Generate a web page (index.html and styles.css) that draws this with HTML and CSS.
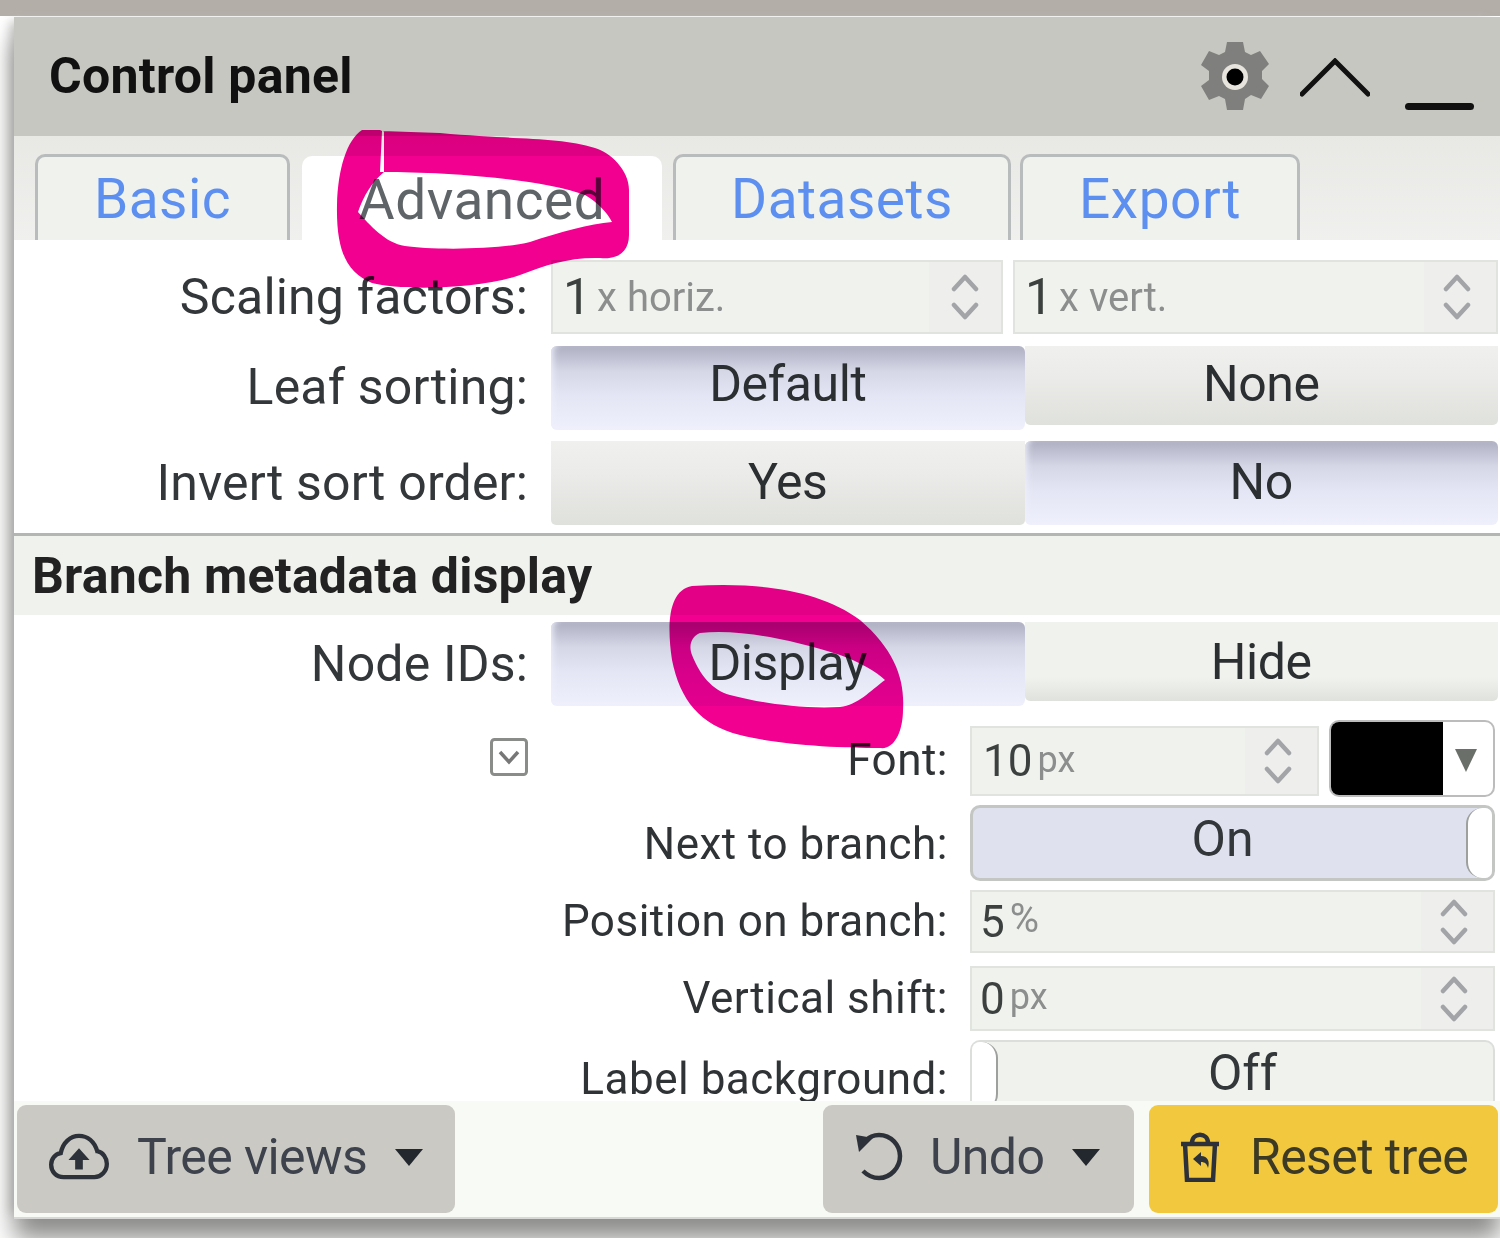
FILE: index.html
```html
<!DOCTYPE html>
<html lang="en">
<head>
<meta charset="utf-8">
<title>Control panel</title>
<link rel="stylesheet" href="styles.css">
</head>
<body>
<div class="page">
  <section class="panel">
    <header class="head">
      <h1 class="title">Control panel</h1>
      <div class="head-icons">
        <svg class="i-gear" viewBox="0 0 70 72"><path fill="#7f7f7d" fill-rule="evenodd" d="M27 1h16l2 10 6 3 9-4 9 13-7 7v8l7 7-8 13-10-4-6 4-2 11H27l-2-11-6-3-10 4-8-14 8-6v-9l-8-6 8-14 10 4 6-3z"/><circle cx="35" cy="36" r="13" fill="#e6e4dc"/><circle cx="35" cy="36" r="8.5" fill="#000"/></svg>
        <svg class="i-up" viewBox="0 0 70 40"><path d="M2 36 35 3l33 33" fill="none" stroke="#111" stroke-width="5" stroke-linecap="round" stroke-linejoin="miter"/></svg>
        <span class="i-min"></span>
      </div>
    </header>
    <nav class="tabs">
      <a class="tab t-basic">Basic</a>
      <a class="tab t-adv active">Advanced</a>
      <a class="tab t-data">Datasets</a>
      <a class="tab t-exp">Export</a>
    </nav>
    <div class="body">
      <div class="row r-scale">
        <label class="lab">Scaling factors:</label>
        <div class="ctl two">
          <div class="num n-first"><b>1</b><small>x horiz.</small><span class="spin"><svg viewBox="0 0 28 46"><path d="M3 15 14 3l11 12M3 31l11 12 11-12"/></svg></span></div>
          <div class="num"><b>1</b><small>x vert.</small><span class="spin"><svg viewBox="0 0 28 46"><path d="M3 15 14 3l11 12M3 31l11 12 11-12"/></svg></span></div>
        </div>
      </div>
      <div class="row r-leaf">
        <label class="lab">Leaf sorting:</label>
        <div class="ctl seg"><button class="on">Default</button><button>None</button></div>
      </div>
      <div class="row r-inv">
        <label class="lab">Invert sort order:</label>
        <div class="ctl seg"><button>Yes</button><button class="on">No</button></div>
      </div>
      <h2 class="sect">Branch metadata display</h2>
      <div class="row r-node">
        <label class="lab">Node IDs:</label>
        <div class="ctl seg"><button class="on">Display</button><button>Hide</button></div>
      </div>
      <div class="sub">
        <div class="chev"><svg viewBox="0 0 38 38"><rect x="1.5" y="1.5" width="35" height="35" rx="3"/><path d="M10 14l9 10 9-10"/></svg></div>
        <div class="sub-rows">
          <div class="srow s-font">
            <label class="slab">Font:</label>
            <div class="sctl fontctl">
              <div class="num small"><b>10</b><small>px</small><span class="spin"><svg viewBox="0 0 28 46"><path d="M3 15 14 3l11 12M3 31l11 12 11-12"/></svg></span></div>
              <div class="color"><span class="swatch"></span><span class="tri"></span></div>
            </div>
          </div>
          <div class="srow s-next">
            <label class="slab">Next to branch:</label>
            <div class="sctl toggle t-on"><span class="tg-text">On</span><span class="knob"></span></div>
          </div>
          <div class="srow s-pos">
            <label class="slab">Position on branch:</label>
            <div class="sctl num small full"><b>5</b><small class="up">%</small><span class="spin"><svg viewBox="0 0 28 46"><path d="M3 15 14 3l11 12M3 31l11 12 11-12"/></svg></span></div>
          </div>
          <div class="srow s-vert">
            <label class="slab">Vertical shift:</label>
            <div class="sctl num small full"><b>0</b><small>px</small><span class="spin"><svg viewBox="0 0 28 46"><path d="M3 15 14 3l11 12M3 31l11 12 11-12"/></svg></span></div>
          </div>
          <div class="srow s-bg">
            <label class="slab">Label background:</label>
            <div class="sctl toggle t-off"><span class="knob"></span><span class="tg-text">Off</span></div>
          </div>
        </div>
      </div>
    </div>
    <footer class="foot">
      <button class="fbtn f-views">
        <svg class="fi i-cloud" viewBox="0 0 64 50"><path d="M16 46C8 46 3 40 3 33c0-6 4-11 10-12C15 10 23 3 32 3c9 0 16 6 19 16 6 1 10 7 10 13 0 8-6 14-13 14z"/><path class="fill" d="M32 16 21 28h7v10h8V28h7z"/></svg>
        <span>Tree views</span><i class="caret"></i>
      </button>
      <span class="grow"></span>
      <button class="fbtn f-undo">
        <svg class="fi i-undo" viewBox="0 0 50 50"><path d="M11 9c4-4 9-6 14-6 12 0 21 10 21 21s-9 22-21 22c-7 0-12-3-16-7"/><path class="fill" d="M2 3l17 3L5 20z"/></svg>
        <span>Undo</span><i class="caret"></i>
      </button>
      <button class="fbtn f-reset">
        <svg class="fi i-trash" viewBox="0 0 40 50"><path d="M1 12h38M5 12l2 36h26l2-36M12 11c0-11 16-11 16 0"/><path class="fill" d="M13 27l8-7v4c7 0 9 6 7 12-1-4-3-6-7-6v4z"/></svg>
        <span>Reset tree</span>
      </button>
    </footer>
  </section>
  <svg class="scribble" viewBox="0 0 1500 1238">
    <path fill-rule="evenodd" d="M362 130C347 140 338 168 337 205c-1 50 12 68 35 78 30 8 108 6 148-8 25-10 50-18 80-17 20 2 29-8 29-23v-45c0-20-19-38-34-42-35-11-75-8-155-15l-58-2-2 41 4 0 0-41-2 0-2-1zM384 172C440 172 540 178 585 195 597 202 607 212 612 222 590 224 560 232 530 242 500 250 430 250 405 246 385 243 370 225 358 212 364 195 372 182 384 172z"/>
    <path fill-rule="evenodd" d="M692 586c68-4 128 4 168 34 35 30 45 60 43 90 0 20-8 40-23 38-40 0-100-3-140-13-40-10-60-35-68-75-6-40-2-70 20-74zM700 633c-8 3-12 12-8 22 8 20 20 35 38 40 30 8 70 14 110 12 18-2 30-16 45-27-8-8-25-18-45-25-50-16-100-26-140-22z"/>
  </svg>
</div>
</body>
</html>
```
FILE: styles.css
```css
* { box-sizing: border-box; }
html, body { margin: 0; padding: 0; }
body { font-family: Roboto, "Liberation Sans", sans-serif; background: #fff; overflow: hidden; }
.page {
  position: relative;
  width: 1500px;
  height: 1238px;
  overflow: hidden;
  padding: 17px 0 0 14px;
  background: linear-gradient(#b4aea8 0 16px, #fff 16px);
  filter: blur(0.6px);
}
.panel {
  position: relative;
  height: 1200px;
  display: flex;
  flex-direction: column;
  background: #fff;
  box-shadow: 0 2px 0 #d8d8d6, 0 22px 24px 0 #8c8c8a, -8px 0 10px -4px #c8c8c6;
}
.head {
  height: 119px;
  flex: none;
  background: #c7c7c1;
  display: flex;
  align-items: center;
  padding: 0 26px 0 35px;
}
.title { margin: 0 auto 2px 0; font-size: 50px; font-weight: 700; color: #111; letter-spacing: 0.25px; }
.head-icons { display: flex; align-items: flex-start; height: 72px; margin-top: 1px; }
.i-gear { width: 70px; height: 72px; }
.i-up { width: 70px; height: 40px; margin: 17px 0 0 30px; }
.i-min { width: 69px; height: 7px; background: #111; border-radius: 4px; margin: 62px 0 0 35px; }

.tabs {
  position: relative;
  height: 104px;
  flex: none;
  display: flex;
  align-items: flex-end;
  padding-left: 21px;
  background: linear-gradient(#e8e8e5, #f0f1ee);
}
.tab {
  height: 86px;
  border: 3px solid #b9bcbc;
  border-bottom: 0;
  border-radius: 10px 10px 0 0;
  background: #f0f2ee;
  color: #5c8ff0;
  font-size: 55px;
  letter-spacing: 0.5px;
  line-height: 84px;
  text-align: center;
  margin-right: 9px;
}
.t-basic { width: 255px; margin-right: 12px; }
.t-adv { width: 360px; margin-right: 11px; height: 84px; background: #fff; border-color: #fff; color: #5f6468; line-height: 82px; }
.t-data { width: 338px; }
.t-exp { width: 280px; }

.body {
  flex: none;
  height: 861px;
  overflow: hidden;
  background: #fff;
  padding-top: 20px;
}
.row { display: flex; }
.lab {
  width: 514px;
  flex: none;
  text-align: right;
  font-size: 50px;
  color: #33373a;
  letter-spacing: 0.17px;
  align-self: center;
}
.ctl { width: 947px; margin-left: 23px; flex: none; }
.r-scale { height: 74px; margin-bottom: 12px; }
.r-leaf { height: 82px; margin-bottom: 13px; }
.r-inv { height: 84px; margin-bottom: 8px; }
.r-node { height: 84px; margin-top: 7px; }

.two { display: flex; gap: 10px; }
.num {
  flex: 1;
  display: flex;
  align-items: center;
  background: #f0f2ee;
  border: 2px solid #e1e3de;
  padding-left: 10px;
  color: #3c403e;
  position: relative;
}
.n-first { flex: none; width: 452px; }
.n-first .spin { padding-right: 0; }
.num b { font-weight: 400; font-size: 50px; }
.num small { font-size: 40px; color: #8b8e8c; margin-left: 6px; }
.spin {
  position: absolute;
  right: 0;
  top: 0;
  bottom: 0;
  width: 72px;
  padding-right: 6px;
  background: #eeeeec;
  display: flex;
  align-items: center;
  justify-content: center;
}
.spin svg { width: 28px; height: 46px; fill: none; stroke: #a2a4a8; stroke-width: 4.5; stroke-linecap: round; stroke-linejoin: round; }

.seg { display: flex; }
.seg button {
  flex: 1;
  border: 0;
  padding: 0 0 4px;
  font: 400 50px Roboto, "Liberation Sans", sans-serif;
  letter-spacing: -0.4px;
  color: #2c2f31;
  height: 79px;
  border-radius: 0 0 5px 5px;
  background: linear-gradient(#f0f0ee, #ebebe9 40%, #dfe1dc);
}
.seg button.on {
  height: 84px;
  padding-bottom: 8px;
  border-radius: 6px;
  background: linear-gradient(#aeb0c2, #d5d7e7 30%, #e4e6f5 60%, #eff0fc);
  box-shadow: inset 6px 0 6px -4px #eeeffb;
}
.r-inv .seg button { height: 84px; padding-bottom: 2px; }
.r-node .seg button.on { padding-bottom: 2px; }
.r-node .seg button:not(.on) { padding-bottom: 0; background: linear-gradient(#f0f2ee, #f0f2ee 70%, #dfe2dc); }

.sect {
  margin: 0;
  height: 82px;
  border-top: 3px solid #b4b6b4;
  background: #f0f2ee;
  font-size: 50px;
  font-weight: 700;
  letter-spacing: 0.2px;
  line-height: 80px;
  color: #222;
  padding-left: 18px;
}
.sub { display: flex; margin-top: 16px; }
.chev { width: 514px; flex: none; display: flex; justify-content: flex-end; padding: 16px 0 0; }
.chev svg { width: 38px; height: 38px; fill: none; stroke: #8a8c8a; stroke-width: 3; }
.chev svg path { stroke: #777; stroke-width: 3.5; }
.sub-rows { flex: none; width: 964px; }
.srow { display: flex; align-items: center; }
.slab { flex: none; width: 420px; margin-right: -1px; text-align: right; font-size: 44px; color: #2f3335; letter-spacing: 0.5px; }
.sctl { flex: none; margin-left: 23px; width: 525px; }
.s-font { height: 75px; margin-bottom: 8px; }
.s-next { height: 76px; margin-bottom: 9px; }
.s-next .slab { padding-top: 2px; }
.s-pos { height: 63px; margin-bottom: 13px; }
.s-pos .slab, .s-vert .slab { margin-top: -2px; }
.s-vert { height: 65px; margin-bottom: 9px; }
.s-bg { height: 70px; }
.s-bg .slab { padding-top: 8px; }
.fontctl { display: flex; height: 75px; gap: 10px; align-items: stretch; }
.num.small { padding-left: 11px; }
.num.small b { font-size: 44px; }
.num.small small { font-size: 36px; margin: 0 0 3px 5px; }
.num.small small.up { font-size: 40px; margin: 0 0 6px 5px; }
.num.full { height: 100%; padding-left: 8px; }
.fontctl .num { margin: 4px 0 1px; }
.s-pos .sctl, .s-vert .sctl { height: 100%; }
.color {
  flex: none;
  width: 166px;
  margin-top: -2px;
  display: flex;
  background: #fff;
  border: 2px solid #bcbcbc;
  border-radius: 10px;
  overflow: hidden;
  align-items: center;
}
.swatch { width: 112px; height: 100%; background: #000; }
.tri { margin: 4px 0 0 12px; border: 11px solid transparent; border-top: 23px solid #6b6f6a; border-bottom: 0; }
.toggle {
  position: relative;
  display: flex;
  height: 76px;
  border: 3px solid #c4c6c4;
  border-radius: 10px;
  overflow: hidden;
  font-size: 50px;
  color: #33373a;
  text-align: center;
  line-height: 62px;
}
.s-bg .toggle { height: 70px; border-width: 2px; border-color: #dcdedb; border-bottom: 0; }
.t-on { background: #dfe2ee; }
.t-off { background: #f0f2ee; }
.tg-text { flex: 1; }
.t-on .tg-text { padding-left: 6px; }
.t-off .tg-text { padding-right: 6px; }
.knob { width: 26px; flex: none; background: #fff; border: 2px solid #9da09c; border-width: 0 0 0 2px; border-radius: 16px 0 0 16px; }
.t-off .knob { border-width: 0 2px 0 0; border-radius: 0 16px 16px 0; }

.foot {
  flex: none;
  height: 116px;
  display: flex;
  padding: 4px 2px 4px 3px;
  background: #f7faf5;
  gap: 15px;
}
.grow { flex: 1; }
.fbtn {
  border: 0;
  height: 108px;
  border-radius: 9px;
  background: #cac9c3;
  display: flex;
  align-items: center;
  font: 400 50px Roboto, "Liberation Sans", sans-serif;
  letter-spacing: -0.6px;
  color: #3d424c;
  padding: 0 0 4px;
}
.f-views { width: 438px; padding-left: 31px; }
.f-undo { width: 311px; padding-left: 31px; }
.f-reset { width: 349px; padding-left: 31px; background: #f2c83f; color: #3c3a24; }
.fi { flex: none; fill: none; stroke: #2d323a; stroke-width: 4.5; }
.fi .fill { fill: #2d323a; stroke: none; }
.i-cloud { width: 62px; height: 48px; margin-right: 27px; }
.i-undo { width: 50px; height: 50px; margin-right: 26px; }
.i-trash { width: 40px; height: 50px; margin-right: 30px; }
.caret { margin-left: 28px; border: 14px solid transparent; border-top: 17px solid #23272e; border-bottom: 0; }
.scribble {
  position: absolute;
  left: 0;
  top: 0;
  width: 1500px;
  height: 1238px;
  fill: #f20090;
  mix-blend-mode: multiply;
  pointer-events: none;
}
```
